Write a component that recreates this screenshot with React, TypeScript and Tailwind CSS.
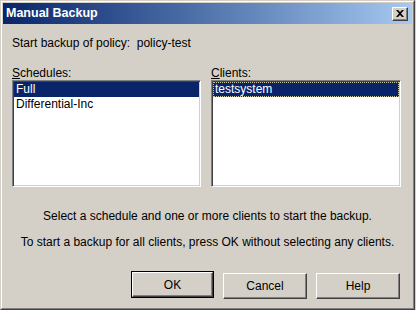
import React from 'react';

const raised =
  'border border-t-white border-l-white border-r-[#404040] border-b-[#404040] shadow-[inset_-1px_-1px_0_#808080,inset_1px_1px_0_#d4d0c8]';

const sunken =
  'border border-t-[#808080] border-l-[#808080] border-r-white border-b-white shadow-[inset_1px_1px_0_#404040,inset_-1px_-1px_0_#d4d0c8]';

function Button({ label, isDefault }: { label: string; isDefault?: boolean }) {
  if (isDefault) {
    return (
      <div className="border border-black">
        <button className={`w-[81px] h-[25px] bg-[#d4d0c8] text-[12px] text-black ${raised}`}>{label}</button>
      </div>
    );
  }
  return (
    <button className={`w-[84px] h-[26px] bg-[#d4d0c8] text-[12px] text-black ${raised}`}>{label}</button>
  );
}

export default function App() {
  return (
    <div
      className="w-[416px] h-[310px] bg-[#d4d0c8] overflow-hidden"
      style={{ fontFamily: '"Liberation Sans", Arial, sans-serif' }}
    >
      <div className="w-[415px] h-[310px] border border-t-[#d4d0c8] border-l-[#d4d0c8] border-r-[#404040] border-b-[#404040]">
        <div className="w-full h-full border border-t-white border-l-white border-r-[#808080] border-b-[#808080] p-px flex flex-col">
          {/* title bar */}
          <div className="h-[21px] flex items-center justify-between pl-[3px] pr-[4px] bg-gradient-to-r from-[#0a246a] to-[#a6caf0]">
            <span className="text-white font-bold text-[12.5px]">Manual Backup</span>
            <div className={`w-[16px] h-[14px] bg-[#d4d0c8] flex items-center justify-center ${raised}`}>
              <svg width="8" height="7" viewBox="0 0 8 7">
                <path d="M0 0h2l2 2 2-2h2L5 3.5 8 7H6L4 5 2 7H0l3-3.5z" fill="#000" />
              </svg>
            </div>
          </div>

          {/* body */}
          <div className="flex flex-col pl-[9px] pr-[9px] text-[12px] text-black">
            <div className="mt-[12px] h-[14px] leading-[14px]">Start backup of policy:&nbsp; policy-test</div>

            <div className="mt-[16px] flex gap-[10px]">
              <div className="flex flex-col w-[189px]">
                <div className="h-[14px] leading-[14px]">
                  <span className="underline">S</span>chedules:
                </div>
                <div className={`h-[107px] bg-white p-px ${sunken}`}>
                  <div className="h-[15px] leading-[15px] px-[2px] bg-[#0a246a] text-white">Full</div>
                  <div className="h-[14px] leading-[14px] px-[2px]">Differential-Inc</div>
                </div>
              </div>
              <div className="flex flex-col w-[190px]">
                <div className="h-[14px] leading-[14px]">
                  <span className="underline">C</span>lients:
                </div>
                <div className={`h-[107px] bg-white p-px ${sunken}`}>
                  <div className="h-[15px] leading-[13px] px-[1px] bg-[#0a246a] text-white border border-dotted border-[#c8c4a8]">
                    testsystem
                  </div>
                </div>
              </div>
            </div>

            <div className="mt-[22px] text-center h-[14px] leading-[14px]">
              Select a schedule and one or more clients to start the backup.
            </div>
            <div className="mt-[12px] text-center h-[14px] leading-[14px]">
              To start a backup for all clients, press OK without selecting any clients.
            </div>

            <div className="mt-[22px] flex justify-end gap-[9px] pr-[3px] items-start">
              <Button label="OK" isDefault />
              <div className="mt-[2px]">
                <Button label="Cancel" />
              </div>
              <div className="mt-[2px]">
                <Button label="Help" />
              </div>
            </div>
          </div>
        </div>
      </div>
    </div>
  );
}
